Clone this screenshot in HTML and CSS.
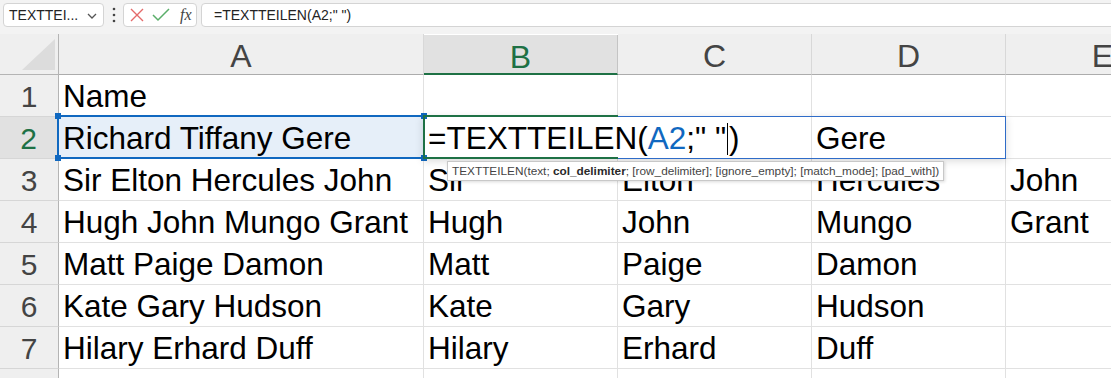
FILE: index.html
```html
<!DOCTYPE html>
<html>
    <head>
        <title>TEXTTEILEN</title>
        <meta charset="UTF-8">
        <link rel="stylesheet" href="styles.css">
    </head>
    <body>

        <div class="toolbar">
            <div class="namebox">
                <span>TEXTTEI...</span>
                <svg class="chevron" width="10" height="6" viewBox="0 0 10 6"><polyline points="1,1 5,5 9,1" fill="none" stroke="#555" stroke-width="1.3"/></svg>
            </div>
            <svg class="dots" width="4" height="16" viewBox="0 0 4 16"><circle cx="2" cy="2" r="1.3" fill="#444"/><circle cx="2" cy="8" r="1.3" fill="#444"/><circle cx="2" cy="14" r="1.3" fill="#444"/></svg>
            <div class="buttons">
                <svg width="14" height="14" viewBox="0 0 14 14"><path d="M1 1 L13 13 M13 1 L1 13" stroke="#e46a6a" stroke-width="1.4" fill="none"/></svg>
                <svg width="18" height="14" viewBox="0 0 18 14"><polyline points="1,7 6,12 17,1" stroke="#5aae6a" stroke-width="1.5" fill="none"/></svg>
                <span class="fx">fx</span>
            </div>
            <div class="formula">=TEXTTEILEN(A2;" ")</div>
        </div>

        <div class="sheet">
            <div class="corner"><svg width="34" height="32" viewBox="0 0 34 32"><polygon points="0,31 33,31 33,0" fill="#dcdcdc"/></svg></div>
            <div class="colhead">A</div>
            <div class="colhead active">B</div>
            <div class="colhead">C</div>
            <div class="colhead">D</div>
            <div class="colhead">E</div>

            <div class="rowhead">1</div>
            <div class="cell">Name</div>
            <div class="cell"></div>
            <div class="cell"></div>
            <div class="cell"></div>
            <div class="cell"></div>

            <div class="rowhead active">2</div>
            <div class="cell ref">Richard Tiffany Gere</div>
            <div class="cell wide">=TEXTTEILEN(<span class="refname">A2</span>;" "<span class="caret"></span>)</div>
            <div class="cell">Gere</div>
            <div class="cell"></div>

            <div class="rowhead">3</div>
            <div class="cell">Sir Elton Hercules John</div>
            <div class="cell">Sir</div>
            <div class="cell">Elton</div>
            <div class="cell">Hercules</div>
            <div class="cell">John</div>

            <div class="rowhead">4</div>
            <div class="cell">Hugh John Mungo Grant</div>
            <div class="cell">Hugh</div>
            <div class="cell">John</div>
            <div class="cell">Mungo</div>
            <div class="cell">Grant</div>

            <div class="rowhead">5</div>
            <div class="cell">Matt Paige Damon</div>
            <div class="cell">Matt</div>
            <div class="cell">Paige</div>
            <div class="cell">Damon</div>
            <div class="cell"></div>

            <div class="rowhead">6</div>
            <div class="cell">Kate Gary Hudson</div>
            <div class="cell">Kate</div>
            <div class="cell">Gary</div>
            <div class="cell">Hudson</div>
            <div class="cell"></div>

            <div class="rowhead">7</div>
            <div class="cell">Hilary Erhard Duff</div>
            <div class="cell">Hilary</div>
            <div class="cell">Erhard</div>
            <div class="cell">Duff</div>
            <div class="cell"></div>

            <div class="rowhead"></div>
            <div class="cell"></div>
            <div class="cell"></div>
            <div class="cell"></div>
            <div class="cell"></div>
            <div class="cell"></div>

            <!-- range reference A2 -->
            <div class="refbox">
                <span class="handle tl"></span>
                <span class="handle tr"></span>
                <span class="handle bl"></span>
                <span class="handle br"></span>
            </div>
            <!-- in-cell editor over B2:D2 -->
            <div class="editbox"></div>
            <div class="activecell"></div>

            <div class="tooltip">TEXTTEILEN(text; <b>col_delimiter</b>; [row_delimiter]; [ignore_empty]; [match_mode]; [pad_with])</div>
        </div>

    </body>
</html>
```

FILE: styles.css
```css
html, body
{
    margin: 0;
    padding: 0;
    overflow: hidden;
    background: #f3f3f3;
    font-family: "Liberation Sans", Arial, sans-serif;
}
*
{
    box-sizing: border-box;
}
.toolbar
{
    display: flex;
    align-items: center;
    height: 34px;
    padding: 0 0 4px 3px;
    width: 1200px;
}
.namebox,
.buttons,
.formula
{
    height: 24px;
    background: #fff;
    border: 1px solid #d4d4d4;
    border-radius: 4px;
    display: flex;
    align-items: center;
}
.namebox
{
    width: 101px;
    padding: 0 0 0 5px;
    font-size: 14px;
    color: #242424;
}
.namebox span
{
    flex: 1;
}
.chevron
{
    margin-right: 6px;
    margin-top: 2px;
}
.dots
{
    margin: 0 7px 0 8px;
}
.buttons
{
    width: 74px;
    padding: 0 0 0 6px;
    gap: 8px;
}
.fx
{
    font-family: "Liberation Serif", serif;
    font-style: italic;
    font-size: 16px;
    color: #444;
    margin-left: 2px;
}
.formula
{
    flex: 1;
    margin-left: 4px;
    padding-left: 12px;
    font-size: 14px;
    color: #242424;
    border-radius: 4px 0 0 4px;
}

.sheet
{
    position: relative;
    display: grid;
    grid-template-columns: 59px 365px 194px 194px 194px 194px;
    grid-template-rows: 41px repeat(8, 42px);
    width: 1200px;
    background: #fff;
}
.corner
{
    background: #efefef;
    border-right: 1px solid #b4b4b4;
    border-bottom: 1px solid #b4b4b4;
    padding: 5px 0 0 22px;
}
.corner svg
{
    display: block;
}
.colhead
{
    background: #efefef;
    border-right: 1px solid #d8d8d8;
    border-bottom: 1px solid #acacac;
    text-align: center;
    font-size: 32px;
    line-height: 36px;
    padding-top: 4px;
    color: #444;
}
.colhead.active
{
    background: #e1e1e1;
    color: #1e7145;
    border-bottom: 2px solid #1e7145;
    border-right-color: #c4c4c4;
    margin-top: 1px;
}
.rowhead
{
    background: #efefef;
    border-right: 1px solid #b4b4b4;
    border-bottom: 1px solid #d6d6d6;
    text-align: center;
    font-size: 30px;
    line-height: 39px;
    padding-top: 2px;
    color: #444;
}
.rowhead.active
{
    background: #e1e1e1;
    color: #1e7145;
    border-right: 2px solid #1e7145;
}
.cell
{
    border-right: 1px solid #e1e1e1;
    border-bottom: 1px solid #e1e1e1;
    font-size: 31.5px;
    line-height: 39px;
    padding: 2px 0 0 4px;
    white-space: nowrap;
    color: #000;
}
.cell.ref
{
    background: #e6eff9;
}
.cell.wide
{
    grid-column: span 2;
}
.refname
{
    color: #1068c0;
}
.caret
{
    display: inline-block;
    width: 1px;
    height: 32px;
    margin: 0 1px;
    background: #000;
    vertical-align: -6px;
}

.refbox
{
    position: absolute;
    left: 57px;
    top: 81px;
    width: 368px;
    height: 44px;
    border: 2px solid #1068c0;
}
.handle
{
    position: absolute;
    width: 6px;
    height: 6px;
    background: #1068c0;
}
.handle.tl { left: -4px; top: -4px; }
.handle.tr { right: -4px; top: -4px; }
.handle.bl { left: -4px; bottom: -4px; }
.handle.br { right: -4px; bottom: -4px; }
.editbox
{
    position: absolute;
    left: 423px;
    top: 82px;
    width: 583px;
    height: 43px;
    border: 1px solid #2f6cc8;
    box-shadow: 0 2px 8px rgba(0, 0, 0, 0.15);
}
.activecell
{
    position: absolute;
    left: 423px;
    top: 81px;
    width: 195px;
    height: 44px;
    border: 2px solid #1e7145;
    border-right: none;
}
.tooltip
{
    position: absolute;
    left: 447px;
    top: 127px;
    height: 20px;
    padding: 0 4px;
    background: #fff;
    border: 1px solid #c8c8c8;
    box-shadow: 1px 1px 3px rgba(0, 0, 0, 0.15);
    font-size: 11.8px;
    line-height: 18px;
    color: #444;
    white-space: nowrap;
}
.tooltip b
{
    color: #2a2a2a;
}
```
